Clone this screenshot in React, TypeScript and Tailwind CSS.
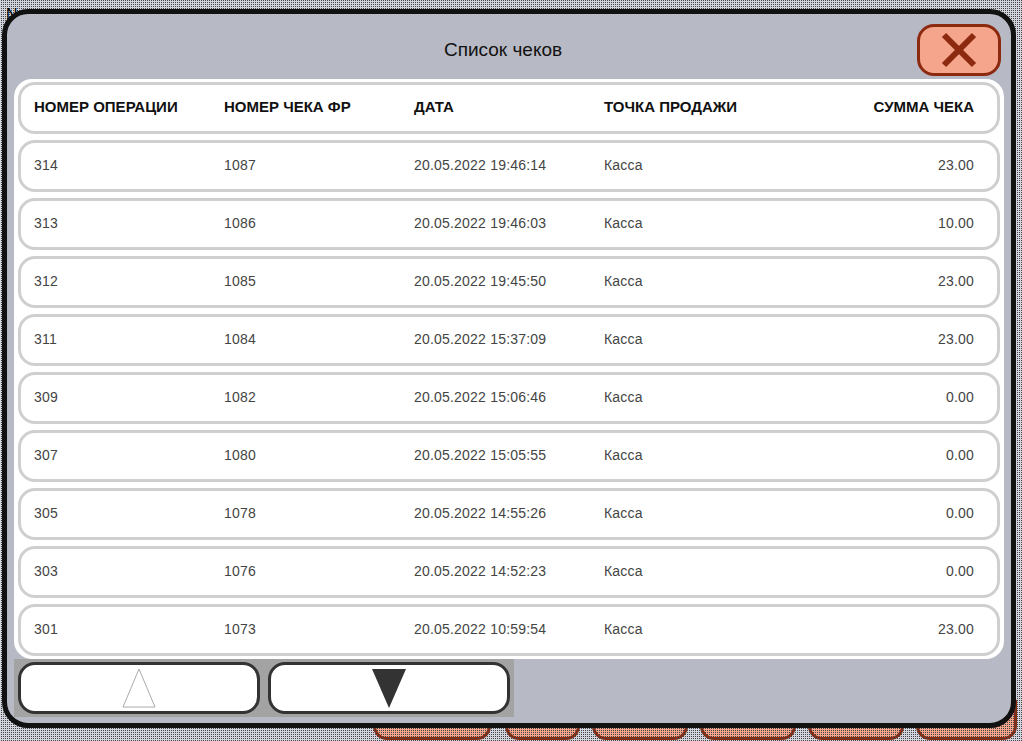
import React from 'react'

const rows = [
    ['314', '1087', '20.05.2022 19:46:14', 'Касса', '23.00'],
    ['313', '1086', '20.05.2022 19:46:03', 'Касса', '10.00'],
    ['312', '1085', '20.05.2022 19:45:50', 'Касса', '23.00'],
    ['311', '1084', '20.05.2022 15:37:09', 'Касса', '23.00'],
    ['309', '1082', '20.05.2022 15:06:46', 'Касса', '0.00'],
    ['307', '1080', '20.05.2022 15:05:55', 'Касса', '0.00'],
    ['305', '1078', '20.05.2022 14:55:26', 'Касса', '0.00'],
    ['303', '1076', '20.05.2022 14:52:23', 'Касса', '0.00'],
    ['301', '1073', '20.05.2022 10:59:54', 'Касса', '23.00'],
]

const headers = ['НОМЕР ОПЕРАЦИИ', 'НОМЕР ЧЕКА ФР', 'ДАТА', 'ТОЧКА ПРОДАЖИ', 'СУММА ЧЕКА']

const Row: React.FC<{ cells: string[]; head?: boolean }> = ({ cells, head }) => (
    <div className={`grid h-[52px] grid-cols-[190px_190px_190px_1fr_auto] items-center rounded-[17px] border-[3px] border-[#cfcfcf] bg-white pb-[2px] pl-[13px] pr-[23px] ${head ? 'text-[15px] font-bold text-[#111]' : 'text-[14px] tracking-[0.2px] text-[#444]'}`}>
        {cells.map((c, i) => (
            <span key={i} className={i === 4 ? 'text-right' : ''}>{c}</span>
        ))}
    </div>
)

const App: React.FC = () => {
    return (
        <div className="relative h-[741px] w-[1022px] overflow-hidden bg-[#d3d5de] font-['Liberation_Sans',Arial,sans-serif]">
            {/* screen behind the dialog */}
            <div className="absolute bottom-[1px] left-[373px] flex gap-[12px]">
                <div className="h-[40px] w-[118px] rounded-b-[14px] border-[3px] border-[#8c2a10] bg-[#f5a58c]" />
                <div className="ml-[2px] h-[40px] w-[75px] rounded-b-[14px] border-[3px] border-[#8c2a10] bg-[#f5a58c]" />
                <div className="h-[40px] w-[96px] rounded-b-[14px] border-[3px] border-[#8c2a10] bg-[#f5a58c]" />
                <div className="h-[40px] w-[96px] rounded-b-[14px] border-[3px] border-[#8c2a10] bg-[#f5a58c]" />
                <div className="h-[40px] w-[96px] rounded-b-[14px] border-[3px] border-[#8c2a10] bg-[#f5a58c]" />
                <div className="h-[40px] w-[101px] rounded-b-[14px] border-[3px] border-[#8c2a10] bg-[#f5a58c]" />
            </div>
            <div className="absolute inset-0 bg-[conic-gradient(#444_25%,transparent_0)] bg-[length:2px_2px]" />
            <span className="absolute left-[6px] top-[3px] text-[16px] text-black">N</span>

            {/* dialog */}
            <div className="absolute left-[2px] top-[9px] h-[719px] w-[1014px] rounded-[26px] border-[5px] border-[#111] bg-[#b7b9c4]">
                <div className="relative flex h-[65px] items-center justify-center pr-[12px] pt-[8px] text-[19px] text-[#111]">
                    Список чеков
                    <button className="absolute right-[10px] top-[10px] flex h-[52px] w-[84px] items-center justify-center rounded-[17px] border-[3px] border-[#8c2a10] bg-[#f5a58c]">
                        <svg width="36" height="36" viewBox="0 0 36 36">
                            <path d="M3 3 L33 33 M33 3 L3 33" stroke="#8c2a10" strokeWidth="6" fill="none" />
                        </svg>
                    </button>
                </div>
                <div className="ml-[7px] flex w-[990px] flex-col gap-[6px] rounded-[18px] bg-white px-[4px] py-[3px]">
                    <Row cells={headers} head />
                    {rows.map((r) => (
                        <Row key={r[0]} cells={r} />
                    ))}
                </div>
                <div className="ml-[7px] flex h-[58px] w-[500px] gap-[8px] bg-[#a3a3a3] px-[4px] pt-[3px]">
                    <button className="flex h-[52px] w-[242px] items-center justify-center rounded-[17px] border-[3px] border-[#333] bg-white">
                        <svg width="34" height="40" viewBox="0 0 34 40">
                            <path d="M17 1 L33 39 L1 39 Z" fill="#fff" stroke="#aaa" strokeWidth="1" />
                        </svg>
                    </button>
                    <button className="flex h-[52px] w-[242px] items-center justify-center rounded-[17px] border-[3px] border-[#333] bg-white">
                        <svg width="34" height="40" viewBox="0 0 34 40">
                            <path d="M0 1 L34 1 L17 40 Z" fill="#333" />
                        </svg>
                    </button>
                </div>
            </div>
        </div>
    )
}

export default App
